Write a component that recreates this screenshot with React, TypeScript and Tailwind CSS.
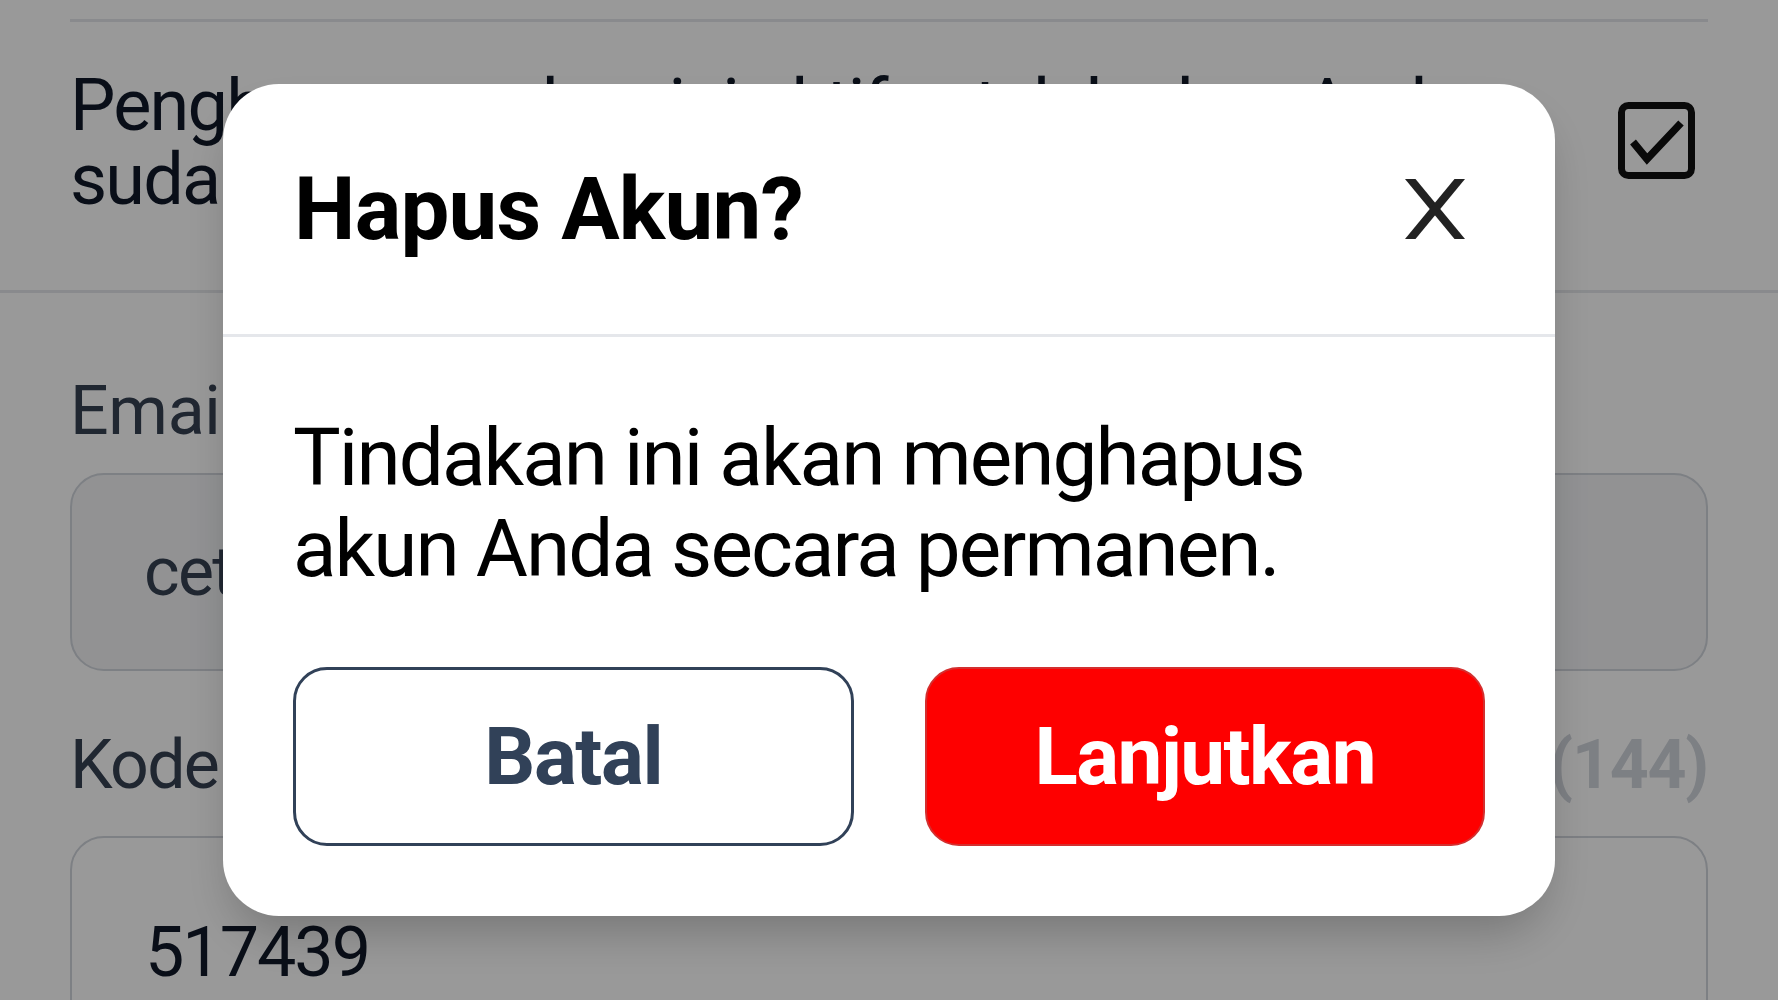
import React from 'react';

const font = { fontFamily: 'Roboto, "Noto Sans", "Liberation Sans", sans-serif' };

const CheckboxIcon = () => (
  <svg width="77" height="77" viewBox="0 0 77 77" fill="none">
    <rect x="3.5" y="3.5" width="70" height="70" rx="7" stroke="#111" strokeWidth="7" />
    <path d="M15 40 L29 57 L63 21" stroke="#111" strokeWidth="7.5" strokeLinejoin="miter" />
  </svg>
);

const CloseIcon = () => (
  <svg width="60" height="60" viewBox="0 0 60 60">
    <path d="M0 0 H10.5 L60 60 H49.5 Z" fill="#222" />
    <path d="M49.5 0 H60 L10.5 60 H0 Z" fill="#222" />
  </svg>
);

export default function App() {
  return (
    <div className="relative w-full h-[1000px] overflow-hidden bg-white" style={font}>
      {/* BACKGROUND PAGE */}
      <div className="px-[70px] pt-[19px]">
        <div className="border-t-[3px] border-gray-200" />
      </div>

      <div className="border-b-[3px] border-gray-200 pt-[47px] pb-[73px] px-[70px] flex justify-between items-center">
        <p className="text-[72px] leading-[74px] tracking-[-1.8px] text-gray-900">
          Penghapusan akun ini aktif setelah akun Anda
          <br />
          sudah diverifikasi
        </p>
        <div className="mr-[13px] mb-[6px] shrink-0">
          <CheckboxIcon />
        </div>
      </div>

      <div className="px-[70px] pt-[78px]">
        <label className="block text-[68px] leading-[80px] tracking-[-0.3px] text-gray-700">Email</label>
        <div className="mt-[22px] h-[198px] rounded-[34px] border-2 border-gray-300 bg-gray-100 flex items-center pl-[72px]">
          <span className="text-[68px] leading-[80px] tracking-[-1.7px] text-gray-700">cetak.kartu@gmail.com</span>
        </div>

        <div className="mt-[54px] flex justify-between items-center">
          <label className="text-[68px] leading-[80px] tracking-[-1.7px] text-gray-700">Kode Verifikasi</label>
          <span className="text-[68px] leading-[80px] tracking-[-1.2px] font-bold text-gray-300">Kirim Ulang (144)</span>
        </div>
        <div className="mt-[31px] h-[198px] rounded-[34px] border-2 border-gray-300 bg-white pl-[73px] pt-[74px]">
          <span className="text-[70px] leading-[80px] tracking-[-2px] text-gray-900">517439</span>
        </div>
      </div>

      {/* OVERLAY */}
      <div className="fixed inset-0 bg-black/40 flex items-center justify-center">
        <div className="w-[1332px] bg-white rounded-[56px] shadow-2xl overflow-hidden">
          <div className="h-[253px] flex items-center justify-between pl-[71px] pr-[90px] border-b-[3px] border-gray-200">
            <h2 className="text-[87px] leading-none font-bold tracking-[-0.8px] text-black">Hapus Akun?</h2>
            <CloseIcon />
          </div>

          <div className="px-[70px] pt-[76px] pb-[70px]">
            <p className="text-[80px] leading-[91px] tracking-[-1.9px] text-black">
              Tindakan ini akan menghapus
              <br />
              akun Anda secara permanen.
            </p>

            <div className="grid grid-cols-2 gap-[71px] mt-[72px]">
              <button className="h-[179px] rounded-[34px] border-[3px] border-slate-700 bg-white text-slate-700 text-[80px] font-bold tracking-[-1.4px]">
                Batal
              </button>
              <button className="h-[179px] rounded-[34px] border-2 border-[#d32f2f] bg-[#fe0000] text-white text-[80px] font-bold tracking-[-1.5px]">
                Lanjutkan
              </button>
            </div>
          </div>
        </div>
      </div>
    </div>
  );
}
